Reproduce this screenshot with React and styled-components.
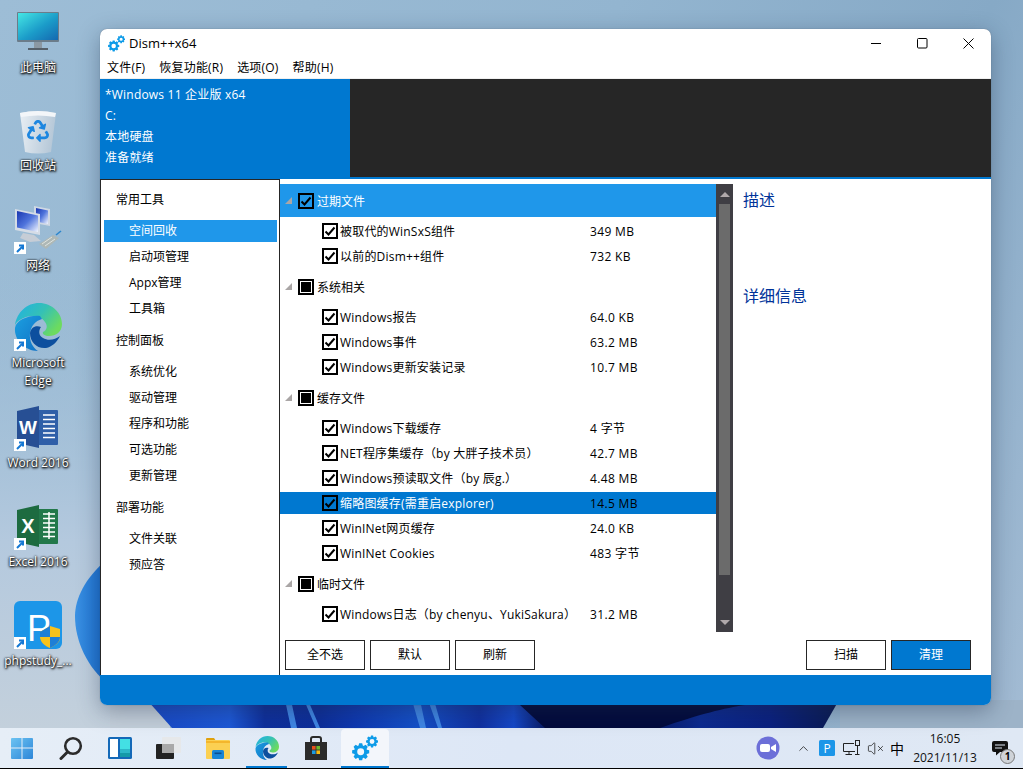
import React from 'react';
import styled, { createGlobalStyle } from 'styled-components';
import { VolumeX, ChevronUp } from 'lucide-react';
import { FaRecycle } from 'react-icons/fa';

const GlobalStyle = createGlobalStyle`
  html, body {
    margin: 0;
    padding: 0;
    height: 100%;
    overflow: hidden;
  }
  #root {
    height: 100%;
  }
  * {
    box-sizing: border-box;
  }
`;

const FONT = `"Open Sans", "Noto Sans CJK SC", sans-serif`;

// Styled Components
const Screen = styled.div`
  position: relative;
  width: 1023px;
  height: 769px;
  display: flex;
  flex-direction: column;
  overflow: hidden;
  font-family: ${FONT};
  font-size: 12px;
  color: #000;
  background: linear-gradient(115deg, #9dbdd6 0%, #93b5d0 45%, #86a9c6 72%, #a4bcd4 100%);
`;

const Desktop = styled.div`
  position: relative;
  flex: 1;
`;

const Wallpaper = styled.svg`
  position: absolute;
  inset: 0;
  width: 100%;
  height: 100%;
`;

const DesktopIcon = styled.div`
  position: absolute;
  left: 0;
  top: ${p => p.$top}px;
  width: 76px;
  display: flex;
  flex-direction: column;
  align-items: center;
  color: #fff;
  text-align: center;
`;

const IconLabel = styled.div`
  margin-top: 3px;
  line-height: 18px;
  white-space: nowrap;
  text-shadow: 0 0 2px #000, 0 1px 3px #000, 1px 1px 2px rgba(0, 0, 0, 0.8);
`;

const Window = styled.div`
  position: absolute;
  left: 100px;
  top: 29px;
  width: 891px;
  height: 676px;
  display: flex;
  flex-direction: column;
  border-radius: 7px;
  overflow: hidden;
  background: #fff;
  box-shadow: 0 0 1px rgba(40, 50, 70, 0.6), 0 6px 22px rgba(30, 45, 70, 0.38);
`;

const TitleBar = styled.div`
  height: 28px;
  display: flex;
  align-items: center;
  padding-left: 8px;
`;

const TitleText = styled.div`
  margin-left: 4px;
  font-size: 13px;
`;

const WindowControls = styled.div`
  margin-left: auto;
  display: flex;
`;

const ControlButton = styled.div`
  width: 46px;
  height: 28px;
  display: flex;
  align-items: center;
  justify-content: center;
`;

const MenuBar = styled.div`
  height: 22px;
  display: flex;
  align-items: center;
  gap: 14px;
  padding: 0 0 2px 7px;
  letter-spacing: 0.2px;
  border-bottom: 1px solid #f0f0f0;
`;

const Banner = styled.div`
  height: 100px;
  display: flex;
  background: #262626;
  border-bottom: 2px solid #0078d0;
`;

const BannerInfo = styled.div`
  width: 250px;
  padding: 5px 0 0 5px;
  background: #0078d0;
  color: #fff;
  line-height: 21px;
  letter-spacing: 0.2px;
`;

const Body = styled.div`
  flex: 1;
  display: flex;
  min-height: 0;
`;

const Sidebar = styled.div`
  width: 180px;
  display: flex;
  flex-direction: column;
  gap: 4px;
  padding: 3px 2px 0 3px;
  border: 1px solid #262626;
  border-bottom: none;
`;

const NavHeading = styled.div`
  height: 33px;
  line-height: 33px;
  padding-left: 12px;
`;

const NavItem = styled.div`
  height: 22px;
  line-height: 22px;
  padding-left: 25px;
  background: ${p => (p.$active ? '#1f97ea' : 'transparent')};
  color: ${p => (p.$active ? '#fff' : '#000')};
`;

const Main = styled.div`
  flex: 1;
  display: flex;
  flex-direction: column;
  padding-top: 5px;
`;

const Upper = styled.div`
  height: 448px;
  display: flex;
`;

const Tree = styled.div`
  width: 436px;
  display: flex;
  flex-direction: column;
`;

const TreeGroup = styled.div`
  display: flex;
  flex-direction: column;
  gap: 3px;
  margin-bottom: 3px;
`;

const GroupRow = styled.div`
  height: 33px;
  display: flex;
  align-items: center;
  padding-left: 5px;
  background: ${p => (p.$active ? '#1f97ea' : 'transparent')};
  color: ${p => (p.$active ? '#fff' : '#000')};
`;

const Triangle = styled.span`
  width: 0;
  height: 0;
  margin-right: 6px;
  border-style: solid;
  border-width: 0 0 7px 7px;
  border-color: transparent transparent #aaa6a6 transparent;
`;

const ItemRow = styled.div`
  height: 22px;
  display: flex;
  align-items: center;
  padding-left: 42px;
  background: ${p => (p.$active ? '#0078d0' : 'transparent')};
`;

const ItemName = styled.div`
  width: 252px;
  padding-left: 2px;
  white-space: nowrap;
  letter-spacing: 0.2px;
  color: ${p => (p.$active ? '#fff' : '#000')};
`;

const GroupName = styled.div`
  margin-left: 3px;
`;

const ItemSize = styled.div`
  white-space: nowrap;
  letter-spacing: 0.35px;
`;

const Box = styled.span`
  width: 16px;
  height: 16px;
  flex: none;
  display: flex;
  align-items: center;
  justify-content: center;
  border: 2px solid #000;
  background: ${p => (p.$active ? p.$active : '#fff')};
`;

const Square = styled.span`
  width: 10px;
  height: 10px;
  background: #000;
`;

const ScrollBar = styled.div`
  width: 17px;
  display: flex;
  flex-direction: column;
  align-items: center;
  background: #3f3e44;
`;

const ScrollCap = styled.div`
  height: 20px;
  flex: none;
  display: flex;
  align-items: center;
  justify-content: center;
`;

const ScrollArrow = styled.span`
  width: 0;
  height: 0;
  border-left: 5px solid transparent;
  border-right: 5px solid transparent;
  border-bottom: ${p => (p.$down ? 'none' : '5px solid #b0a9ab')};
  border-top: ${p => (p.$down ? '5px solid #b0a9ab' : 'none')};
`;

const ScrollThumb = styled.div`
  width: 11px;
  height: 371px;
  flex: none;
  background: #6b6b6b;
`;

const ScrollRest = styled.div`
  flex: 1;
`;

const DetailPane = styled.div`
  flex: 1;
  padding: 5px 0 0 10px;
`;

const DetailHeading = styled.div`
  height: 96px;
  font-size: 16px;
  line-height: 22px;
  color: #003399;
`;

const ActionBar = styled.div`
  display: flex;
  gap: 5px;
  margin-top: 8px;
  padding: 0 20px 0 5px;
`;

const ActionButton = styled.div`
  width: 80px;
  height: 30px;
  line-height: 28px;
  text-align: center;
  border: 1px solid #262626;
  background: ${p => (p.$primary ? '#0078d0' : '#fff')};
  color: ${p => (p.$primary ? '#fff' : '#000')};
  margin-left: ${p => (p.$push ? 'auto' : '0')};
`;

const StatusBar = styled.div`
  height: 30px;
  flex: none;
  background: #0078d0;
`;

const Taskbar = styled.div`
  height: 41px;
  flex: none;
  display: flex;
  align-items: stretch;
  background: linear-gradient(90deg, #e6eef7 0%, #dde7f6 50%, #dfe8f4 100%);
  border-bottom: 1px solid #000;
`;

const TaskIcons = styled.div`
  display: flex;
  margin-left: -3px;
`;

const TaskButton = styled.div`
  position: relative;
  width: 49px;
  display: flex;
  align-items: center;
  justify-content: center;
  &::after {
    content: '';
    display: ${p => (p.$open ? 'block' : 'none')};
    position: absolute;
    left: ${p => (p.$active ? '1px' : '4px')};
    right: ${p => (p.$active ? '0' : '4px')};
    bottom: 0;
    height: 2px;
    background: #0078d0;
  }
  &::before {
    content: '';
    display: ${p => (p.$active ? 'block' : 'none')};
    position: absolute;
    inset: 1px 0 0 1px;
    border-radius: 4px;
    background: #f3f6fb;
  }
  & > svg {
    position: relative;
  }
`;

const Tray = styled.div`
  margin-left: auto;
  display: flex;
  align-items: center;
  padding-right: 6px;
`;

const TrayItem = styled.div`
  position: relative;
  width: ${p => p.$w}px;
  margin-left: ${p => p.$gap || 0}px;
  display: flex;
  align-items: center;
  justify-content: center;
`;

const ImeText = styled.span`
  font-size: 14px;
`;

const Clock = styled.div`
  width: 76px;
  text-align: center;
  font-size: 12px;
  line-height: 19px;
  color: #111;
`;

const NoticeBadge = styled.span`
  position: absolute;
  right: 2px;
  top: 8px;
  width: 15px;
  height: 15px;
  line-height: 13px;
  border-radius: 50%;
  border: 1px solid #777;
  background: #cfd3d8;
  color: #000;
  font-size: 10px;
  font-weight: 700;
  text-align: center;
`;

// Drawings
function gearPath(cx, cy, outer, inner, teeth) {
  const step = (Math.PI * 2) / teeth;
  let d = '';
  for (let i = 0; i < teeth; i++) {
    const a = i * step;
    const pts = [
      [inner, a - step * 0.42],
      [outer, a - step * 0.22],
      [outer, a + step * 0.22],
      [inner, a + step * 0.42],
    ];
    pts.forEach(([r, t], j) => {
      const x = (cx + r * Math.cos(t)).toFixed(2);
      const y = (cy + r * Math.sin(t)).toFixed(2);
      d += `${i === 0 && j === 0 ? 'M' : 'L'}${x} ${y} `;
    });
  }
  return d + 'Z';
}

const Gear = ({ cx, cy, r }) => (
  <path
    fillRule="evenodd"
    fill="#0d9be8"
    d={`${gearPath(cx, cy, r, r * 0.76, 8)} M${cx - r * 0.4} ${cy}a${r * 0.4} ${r * 0.4} 0 1 0 ${r * 0.8} 0a${r * 0.4} ${r * 0.4} 0 1 0 ${-r * 0.8} 0Z`}
  />
);

const Gears = ({ size }) => (
  <svg width={size} height={size} viewBox="0 0 24 24">
    <Gear cx={8} cy={15.5} r={8} />
    <Gear cx={18.5} cy={6} r={5.6} />
  </svg>
);

const Shortcut = ({ y = 36 }) => (
  <g transform={`translate(0 ${y})`}>
    <rect width="12" height="12" fill="#fff" />
    <path d="M3 10 L8 5 M5 3.5 H9 V7.5" stroke="#1478d4" strokeWidth="2" fill="none" />
  </g>
);

const MonitorIcon = () => (
  <svg width="48" height="48" viewBox="0 0 48 48">
    <defs>
      <linearGradient id="pcScreen" x1="0" y1="0" x2="1" y2="1">
        <stop offset="0" stopColor="#45e6e4" />
        <stop offset="0.55" stopColor="#1b9cc9" />
        <stop offset="1" stopColor="#1468b0" />
      </linearGradient>
    </defs>
    <rect x="3" y="4" width="42" height="30" rx="1" fill="#6b7c8a" />
    <rect x="4" y="5" width="40" height="27" fill="url(#pcScreen)" />
    <rect x="20" y="34" width="8" height="6" fill="#8b98a3" />
    <rect x="14" y="40" width="20" height="2" fill="#55606a" />
  </svg>
);

const BinIcon = () => (
  <svg width="48" height="48" viewBox="0 0 48 48">
    <defs>
      <linearGradient id="binBody" x1="0" y1="0" x2="1" y2="0.2">
        <stop offset="0" stopColor="#e9eff4" />
        <stop offset="1" stopColor="#b6c8d8" />
      </linearGradient>
    </defs>
    <path d="M6 7 Q24 3 42 7 L37 46 Q24 49 11 46 Z" fill="url(#binBody)" />
    <path d="M6 7 Q24 3 42 7 L41 11 Q24 8 7 11 Z" fill="#f3f6f9" />
    <FaRecycle x="13" y="14" size="22" color="#1c86e0" />
  </svg>
);

const NetworkIcon = () => (
  <svg width="48" height="48" viewBox="0 0 48 48">
    <defs>
      <linearGradient id="netScreen" x1="0" y1="0" x2="1" y2="1">
        <stop offset="0" stopColor="#1a36b0" />
        <stop offset="0.5" stopColor="#4f74dc" />
        <stop offset="1" stopColor="#f2f6ff" />
      </linearGradient>
    </defs>
    <path d="M20 0 L36 3 V20 L20 17 Z" fill="#cfd8e4" />
    <path d="M22 2 L34 4.5 V18 L22 15.5 Z" fill="url(#netScreen)" />
    <path d="M1 3 L26 8 V29 L1 24 Z" fill="#d5dce6" />
    <path d="M3 5 L24 9.5 V26 L3 21.5 Z" fill="url(#netScreen)" />
    <path d="M9 27 L20 29 L27 35 L16 36 L6 32 Z" fill="#c6cdd6" />
    <path d="M25 38 L39 29 L45 32 L32 43 Z" fill="#aeb8b6" />
    <path d="M28 38 L38 31 M31 40 L41 33" stroke="#dfe4e0" strokeWidth="1" />
    <path d="M42 29 L47 25" stroke="#2c86cc" strokeWidth="1.6" />
    <Shortcut />
  </svg>
);

const EdgeGlyph = ({ size, shortcut }) => (
  <svg width={size} height={size} viewBox="0 0 48 48">
    <defs>
      <linearGradient id={`edgeTop${size}`} x1="0" y1="0" x2="1" y2="0.6">
        <stop offset="0" stopColor="#1fb0e6" />
        <stop offset="0.55" stopColor="#35c1b5" />
        <stop offset="1" stopColor="#6ddb5e" />
      </linearGradient>
      <linearGradient id={`edgeLeft${size}`} x1="0" y1="0" x2="1" y2="1">
        <stop offset="0" stopColor="#1c9fe0" />
        <stop offset="1" stopColor="#0f6fc4" />
      </linearGradient>
    </defs>
    <path d="M1 22 C3 9 13 0 25 0 C38 0 48 10 48 21 C48 29 42 33 35 33 C31 33 28 31 29 29 C33 27 34 23 31 19 C27 13 19 12 12 14 C7 16 3 18 1 22 Z" fill={`url(#edgeTop${size})`} />
    <path d="M26 13 C15 12 2 17 1 25 C0 37 11 48 24 48 C19 45 15 38 16 30 C17 23 21 18 28 16 Z" fill={`url(#edgeLeft${size})`} />
    <path d="M16 30 C16 39 23 46 32 45 C38 44 43 39 46 33 C41 37 34 38 29 35 C25 33 24 28 27 24 C21 22 17 25 16 30 Z" fill="#0d4f9e" />
    {shortcut && <Shortcut />}
  </svg>
);

const WordIcon = () => (
  <svg width="48" height="48" viewBox="0 0 48 48">
    <rect x="24" y="7" width="20" height="35" rx="1" fill="#2f5fa8" />
    <path d="M29 12 H41 M29 16.5 H41 M29 21 H41 M29 25.5 H41 M29 30 H41 M29 34.5 H41" stroke="#fff" strokeWidth="1.7" />
    <path d="M3 8 L25 3 V45 L3 40 Z" fill="#274f94" />
    <text x="14" y="31" textAnchor="middle" fontFamily="Liberation Sans, sans-serif" fontWeight="700" fontSize="19" fill="#fff">W</text>
    <Shortcut />
  </svg>
);

const ExcelIcon = () => (
  <svg width="48" height="48" viewBox="0 0 48 48">
    <rect x="24" y="7" width="20" height="35" rx="1" fill="#22784a" />
    <path d="M29 12 H41 M29 16.5 H41 M29 21 H41 M29 25.5 H41 M29 30 H41 M29 34.5 H41 M35 10 V37" stroke="#fff" strokeWidth="1.5" />
    <path d="M3 8 L25 3 V45 L3 40 Z" fill="#1d6b40" />
    <text x="14" y="31" textAnchor="middle" fontFamily="Liberation Sans, sans-serif" fontWeight="700" fontSize="20" fill="#fff">X</text>
    <Shortcut />
  </svg>
);

const PhpStudyIcon = () => (
  <svg width="48" height="48" viewBox="0 0 48 48">
    <rect width="48" height="48" rx="6" fill="#1c96e8" />
    <text x="25" y="40" textAnchor="middle" fontFamily="Liberation Sans, sans-serif" fontSize="36" fill="#fff">P</text>
    <path d="M26 31 L36 25 L46 28 V37 C46 42 40 45 36 47 C31 45 26 41 26 36 Z" fill="#f8c21a" />
    <path d="M36 25 V36 H26 V31 Z M36 36 H46 C46 42 40 45 36 47 Z" fill="#1f7fd6" />
    <Shortcut />
  </svg>
);

const StartIcon = () => (
  <svg width="22" height="22" viewBox="0 0 22 22">
    <defs>
      <linearGradient id="startTile" x1="0" y1="0" x2="1" y2="1">
        <stop offset="0" stopColor="#6cc3f2" />
        <stop offset="1" stopColor="#2d86d8" />
      </linearGradient>
    </defs>
    <path d="M1 1 H10.5 V10.5 H0 V2 Q0 1 1 1 Z M11.5 1 H21 Q22 1 22 2 V10.5 H11.5 Z M0 11.5 H10.5 V22 H1 Q0 22 0 21 Z M11.5 11.5 H22 V21 Q22 22 21 22 H11.5 Z" fill="url(#startTile)" />
  </svg>
);

const SearchIcon = () => (
  <svg width="24" height="24" viewBox="0 0 24 24">
    <circle cx="14" cy="10" r="7.8" fill="none" stroke="#2b2b2b" strokeWidth="2.6" />
    <path d="M8.5 16 L2 22.5" stroke="#2b2b2b" strokeWidth="3" strokeLinecap="round" />
  </svg>
);

const WidgetsIcon = () => (
  <svg width="24" height="22" viewBox="0 0 24 22">
    <rect width="24" height="22" rx="1.5" fill="#1469b8" />
    <rect x="2" y="2" width="8" height="18" fill="#fff" />
    <rect x="12" y="2" width="10" height="10" fill="#43e0e4" />
    <rect x="12" y="12" width="10" height="4" fill="#2cb8c8" />
    <rect x="12" y="16" width="10" height="4" fill="#149aa8" />
  </svg>
);

const TaskViewIcon = () => (
  <svg width="25" height="22" viewBox="0 0 25 22">
    <rect x="0" y="7" width="18" height="15" rx="1" fill="#222" />
    <rect x="6" y="0" width="19" height="16" rx="1" fill="#e6e8ea" />
    <rect x="6" y="7" width="12" height="9" fill="#a9a9a9" />
  </svg>
);

const FolderIcon = () => (
  <svg width="24" height="21" viewBox="0 0 24 21">
    <path d="M0 1 Q0 0 1 0 H8 L10 3 H0 Z" fill="#e0a10c" />
    <rect y="2" width="24" height="19" rx="1" fill="#fbd052" />
    <path d="M0 3 H24 V5 H0 Z" fill="#f4b62c" />
    <rect x="6" y="12" width="12" height="9" rx="1.5" fill="#1a86d6" />
    <rect x="8.5" y="14.5" width="7" height="1.6" fill="#0c4f90" />
  </svg>
);

const StoreIcon = () => (
  <svg width="24" height="25" viewBox="0 0 24 25">
    <path d="M7 7 V3 Q7 1 9 1 H15 Q17 1 17 3 V7" fill="none" stroke="#2a2a2a" strokeWidth="2" />
    <path d="M1 6 H23 V24 H1 Z" fill="#2b2b2b" />
    <rect x="8" y="10" width="3.6" height="3.6" fill="#e8501f" />
    <rect x="12.4" y="10" width="3.6" height="3.6" fill="#6cb82c" />
    <rect x="8" y="14.4" width="3.6" height="3.6" fill="#1c9be0" />
    <rect x="12.4" y="14.4" width="3.6" height="3.6" fill="#f7b90f" />
  </svg>
);

const MeetIcon = () => (
  <svg width="24" height="24" viewBox="0 0 24 24">
    <circle cx="12" cy="12" r="11.5" fill="#6c6fd8" />
    <rect x="4" y="8" width="10" height="8" rx="2" fill="#fff" />
    <path d="M15 11 L20 8 V16 L15 13 Z" fill="#fff" />
  </svg>
);

const PTrayIcon = () => (
  <svg width="16" height="16" viewBox="0 0 16 16">
    <rect width="16" height="16" rx="1.5" fill="#1c96e8" />
    <text x="8" y="12.5" textAnchor="middle" fontFamily="Open Sans, sans-serif" fontSize="12" fill="#fff">P</text>
  </svg>
);

const NetTrayIcon = () => (
  <svg width="18" height="16" viewBox="0 0 18 16" fill="none" stroke="#222" strokeWidth="1">
    <path d="M12 3.5 H1.5 V11.5 H13" />
    <path d="M7 11.5 V14.5 M3.5 14.5 H10" />
    <rect x="13.5" y="0.5" width="4" height="5" fill="#dfe8f4" />
    <path d="M15.5 5.5 V14.5 M13 14.5 H17.5" />
  </svg>
);

const NoticeIcon = () => (
  <svg width="16" height="15" viewBox="0 0 16 15">
    <path d="M2 0 H14 Q16 0 16 2 V9 Q16 11 14 11 H8 L4 14.5 V11 H2 Q0 11 0 9 V2 Q0 0 2 0 Z" fill="#111" />
    <path d="M3 4 H13 M3 7 H10" stroke="#dfe8f4" strokeWidth="1" />
  </svg>
);

const CheckMark = () => (
  <svg width="12" height="12" viewBox="0 0 12 12">
    <path d="M1.5 6.5 L4.5 9.5 L10.5 2.5" fill="none" stroke="#000" strokeWidth="2" />
  </svg>
);

// Data
const nav = [
  { title: '常用工具', items: ['空间回收', '启动项管理', 'Appx管理', '工具箱'] },
  { title: '控制面板', items: ['系统优化', '驱动管理', '程序和功能', '可选功能', '更新管理'] },
  { title: '部署功能', items: ['文件关联', '预应答'] },
];

const groups = [
  {
    title: '过期文件',
    active: true,
    items: [
      ['被取代的WinSxS组件', '349 MB'],
      ['以前的Dism++组件', '732 KB'],
    ],
  },
  {
    title: '系统相关',
    items: [
      ['Windows报告', '64.0 KB'],
      ['Windows事件', '63.2 MB'],
      ['Windows更新安装记录', '10.7 MB'],
    ],
  },
  {
    title: '缓存文件',
    items: [
      ['Windows下载缓存', '4 字节'],
      ['NET程序集缓存（by 大胖子技术员）', '42.7 MB'],
      ['Windows预读取文件（by 辰g.）', '4.48 MB'],
      ['缩略图缓存(需重启explorer)', '14.5 MB', true],
      ['WinINet网页缓存', '24.0 KB'],
      ['WinINet Cookies', '483 字节'],
    ],
  },
  {
    title: '临时文件',
    items: [['Windows日志（by chenyu、YukiSakura）', '31.2 MB']],
  },
];

const desktopIcons = [
  { top: 8, label: ['此电脑'], icon: <MonitorIcon /> },
  { top: 106, label: ['回收站'], icon: <BinIcon /> },
  { top: 206, label: ['网络'], icon: <NetworkIcon /> },
  { top: 303, label: ['Microsoft', 'Edge'], icon: <EdgeGlyph size={48} shortcut /> },
  { top: 403, label: ['Word 2016'], icon: <WordIcon /> },
  { top: 502, label: ['Excel 2016'], icon: <ExcelIcon /> },
  { top: 601, label: ['phpstudy_...'], icon: <PhpStudyIcon /> },
];

const WallpaperArt = () => (
  <Wallpaper viewBox="0 0 1023 728" preserveAspectRatio="none">
    <defs>
      <linearGradient id="wallLeft" x1="0" y1="0" x2="0" y2="1">
        <stop offset="0" stopColor="#9dbdd6" stopOpacity="0" />
        <stop offset="0.6" stopColor="#b4c9de" />
        <stop offset="1" stopColor="#c3d0dc" />
      </linearGradient>
      <linearGradient id="bloomStrip" x1="147" y1="0" x2="839" y2="0" gradientUnits="userSpaceOnUse">
        <stop offset="0" stopColor="#1848c4" />
        <stop offset="0.12" stopColor="#1d58d6" />
        <stop offset="0.17" stopColor="#0e2f9c" />
        <stop offset="0.25" stopColor="#0d2e9a" />
        <stop offset="0.3" stopColor="#0e38b0" />
        <stop offset="0.39" stopColor="#1450c8" />
        <stop offset="0.48" stopColor="#1030a0" />
        <stop offset="0.53" stopColor="#1548c8" />
        <stop offset="0.57" stopColor="#0a1f70" />
        <stop offset="0.66" stopColor="#020a40" />
        <stop offset="0.8" stopColor="#0c2a90" />
        <stop offset="0.9" stopColor="#0a2080" />
        <stop offset="1" stopColor="#0a1a50" />
      </linearGradient>
      <linearGradient id="petal" x1="0" y1="0" x2="1" y2="0">
        <stop offset="0" stopColor="#3b92e4" />
        <stop offset="1" stopColor="#1468cc" />
      </linearGradient>
    </defs>
    <rect x="0" y="260" width="110" height="468" fill="url(#wallLeft)" />
    <rect x="110" y="640" width="60" height="88" fill="#c3ced9" />
    <rect x="840" y="700" width="183" height="28" fill="#9db3c8" />
    <path d="M104 562 C86 578 75 598 75 616 C75 642 88 668 108 684 Z" fill="url(#petal)" />
    <path d="M147 700 H839 L823 728 H172 Z" fill="url(#bloomStrip)" />
    <path d="M285 700 L291 728 H297 L291 700 Z M304 700 L316 728 H320 L308 700 Z M412 700 L420 728 H426 L420 700 Z M428 700 L438 728 H442 L434 700 Z" fill="#3f86e4" />
    <path d="M520 705 L545 728 H660 C700 714 725 708 745 705 Z" fill="#020a3c" />
  </Wallpaper>
);

export default function App() {
  return (
    <>
      <GlobalStyle />
      <Screen>
        <Desktop>
          <WallpaperArt />
          {desktopIcons.map(d => (
            <DesktopIcon key={d.top} $top={d.top}>
              {d.icon}
              <IconLabel>
                {d.label.map(l => (
                  <div key={l}>{l}</div>
                ))}
              </IconLabel>
            </DesktopIcon>
          ))}

          <Window>
            <TitleBar>
              <Gears size={17} />
              <TitleText>Dism++x64</TitleText>
              <WindowControls>
                <ControlButton>
                  <svg width="11" height="11" viewBox="0 0 11 11">
                    <path d="M0 5.5 H10" stroke="#000" />
                  </svg>
                </ControlButton>
                <ControlButton>
                  <svg width="11" height="11" viewBox="0 0 11 11">
                    <rect x="0.5" y="0.5" width="9.5" height="9.5" rx="1" fill="none" stroke="#000" />
                  </svg>
                </ControlButton>
                <ControlButton>
                  <svg width="11" height="11" viewBox="0 0 11 11">
                    <path d="M0.5 0.5 L10.5 10.5 M10.5 0.5 L0.5 10.5" stroke="#000" />
                  </svg>
                </ControlButton>
              </WindowControls>
            </TitleBar>

            <MenuBar>
              <span>文件(F)</span>
              <span>恢复功能(R)</span>
              <span>选项(O)</span>
              <span>帮助(H)</span>
            </MenuBar>

            <Banner>
              <BannerInfo>
                <div>*Windows 11 企业版 x64</div>
                <div>C:</div>
                <div>本地硬盘</div>
                <div>准备就绪</div>
              </BannerInfo>
            </Banner>

            <Body>
              <Sidebar>
                {nav.map(g => (
                  <React.Fragment key={g.title}>
                    <NavHeading>{g.title}</NavHeading>
                    {g.items.map(i => (
                      <NavItem key={i} $active={i === '空间回收'}>
                        {i}
                      </NavItem>
                    ))}
                  </React.Fragment>
                ))}
              </Sidebar>

              <Main>
                <Upper>
                  <Tree>
                    {groups.map(g => (
                      <TreeGroup key={g.title}>
                        <GroupRow $active={g.active}>
                          <Triangle />
                          <Box $active={g.active ? '#1f97ea' : null}>
                            {g.active ? <CheckMark /> : <Square />}
                          </Box>
                          <GroupName>{g.title}</GroupName>
                        </GroupRow>
                        {g.items.map(([name, size, active]) => (
                          <ItemRow key={name} $active={active}>
                            <Box $active={active ? '#0078d0' : null}>
                              <CheckMark />
                            </Box>
                            <ItemName $active={active}>{name}</ItemName>
                            <ItemSize>{size}</ItemSize>
                          </ItemRow>
                        ))}
                      </TreeGroup>
                    ))}
                  </Tree>

                  <ScrollBar>
                    <ScrollCap>
                      <ScrollArrow />
                    </ScrollCap>
                    <ScrollThumb />
                    <ScrollRest />
                    <ScrollCap>
                      <ScrollArrow $down />
                    </ScrollCap>
                  </ScrollBar>

                  <DetailPane>
                    <DetailHeading>描述</DetailHeading>
                    <DetailHeading>详细信息</DetailHeading>
                  </DetailPane>
                </Upper>

                <ActionBar>
                  <ActionButton>全不选</ActionButton>
                  <ActionButton>默认</ActionButton>
                  <ActionButton>刷新</ActionButton>
                  <ActionButton $push>扫描</ActionButton>
                  <ActionButton $primary>清理</ActionButton>
                </ActionBar>
              </Main>
            </Body>

            <StatusBar />
          </Window>
        </Desktop>

        <Taskbar>
          <TaskIcons>
            <TaskButton><StartIcon /></TaskButton>
            <TaskButton><SearchIcon /></TaskButton>
            <TaskButton><WidgetsIcon /></TaskButton>
            <TaskButton><TaskViewIcon /></TaskButton>
            <TaskButton><FolderIcon /></TaskButton>
            <TaskButton $open><EdgeGlyph size={24} /></TaskButton>
            <TaskButton><StoreIcon /></TaskButton>
            <TaskButton $open $active><Gears size={26} /></TaskButton>
          </TaskIcons>

          <Tray>
            <TrayItem $w={24}><MeetIcon /></TrayItem>
            <TrayItem $w={24} $gap={11}><ChevronUp size={15} strokeWidth={1.3} color="#222" /></TrayItem>
            <TrayItem $w={24}><PTrayIcon /></TrayItem>
            <TrayItem $w={24}><NetTrayIcon /></TrayItem>
            <TrayItem $w={24}><VolumeX size={17} strokeWidth={1.1} color="#222" /></TrayItem>
            <TrayItem $w={20}><ImeText>中</ImeText></TrayItem>
            <Clock>
              <div>16:05</div>
              <div>2021/11/13</div>
            </Clock>
            <TrayItem $w={34}>
              <NoticeIcon />
              <NoticeBadge>1</NoticeBadge>
            </TrayItem>
          </Tray>
        </Taskbar>
      </Screen>
    </>
  );
}
